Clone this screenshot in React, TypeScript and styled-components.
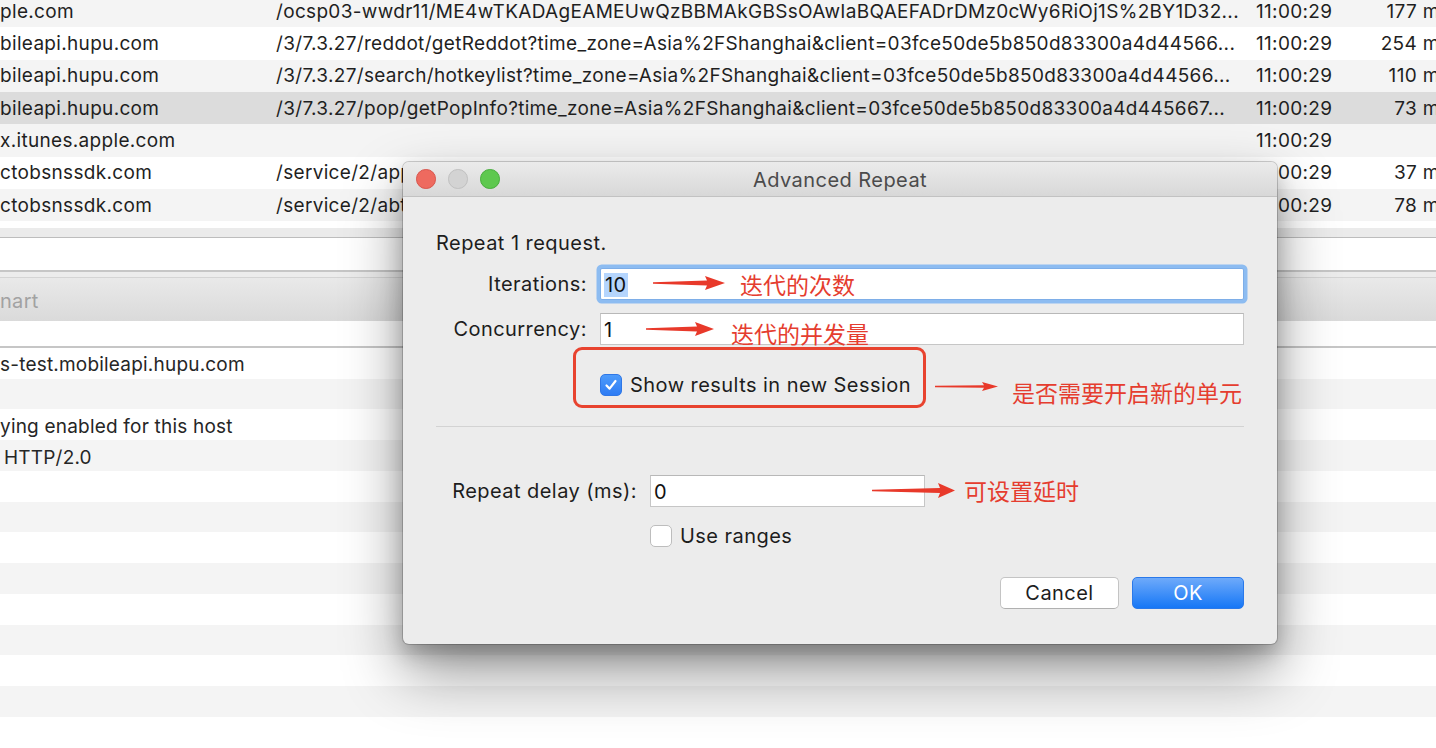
import React from "react";
import styled, { createGlobalStyle } from "styled-components";

const GlobalStyle = createGlobalStyle`
  html, body { margin: 0; padding: 0; background: #fff; }
  body { font-family: Inter, "Noto Sans CJK SC", sans-serif; color: #222; }
  * { box-sizing: border-box; }
`;

const Screen = styled.div`
  position: relative;
  width: 1436px;
  height: 748px;
  overflow: hidden;
  background: #fff;
  font-size: 19px;
`;

const Backdrop = styled.div`
  display: flex;
  flex-direction: column;
`;

const TopTable = styled.div`
  margin-top: -5px;
  display: flex;
  flex-direction: column;
`;

type Tone = "gray" | "white" | "sel";
const toneBg = (t: Tone) => (t === "gray" ? "#f4f4f4" : t === "sel" ? "#dcdcdc" : "#ffffff");

const TopRow = styled.div<{ $tone: Tone }>`
  display: grid;
  grid-template-columns: 276px 980px 108px 96px;
  width: 1460px;
  height: 32.33px;
  align-items: center;
  background: ${(p) => toneBg(p.$tone)};
  color: #1f1f1f;
  letter-spacing: 0.32px;
`;

const Cell = styled.div<{ $right?: boolean }>`
  white-space: nowrap;
  overflow: hidden;
  text-align: ${(p) => (p.$right ? "right" : "left")};
  padding-right: 10px;
`;

const TableFoot = styled.div`
  height: 6.7px;
  background: #fff;
`;

const HScroll = styled.div`
  height: 10px;
  background: #ebebeb;
  border-bottom: 1px solid #bdbdbd;
`;

const BlankStrip = styled.div<{ $h: number }>`
  height: ${(p) => p.$h}px;
  background: #fff;
  border-bottom: 2px solid #c6c6c6;
`;

const TabGap = styled.div`
  height: 6px;
  background: #ececec;
  border-bottom: 1px solid #d4d4d4;
`;

const TabBar = styled.div`
  height: 43px;
  background: linear-gradient(#e9e9e9, #dadada);
  display: flex;
  align-items: center;
  color: #a2a2a2;
  font-size: 20px;
  letter-spacing: 0.3px;
  padding-top: 3px;
`;

const BottomRow = styled.div<{ $tone: Tone }>`
  height: 30.75px;
  display: flex;
  align-items: center;
  white-space: nowrap;
  background: ${(p) => toneBg(p.$tone)};
  color: #262626;
  letter-spacing: 0.2px;
  padding-top: 3px;
`;

const Indent = styled.span`
  padding-left: 4px;
`;

/* ---------- dialog ---------- */

const Dialog = styled.div`
  position: absolute;
  left: 403px;
  top: 162px;
  width: 874px;
  height: 482px;
  background: #ececec;
  border-radius: 6px;
  font-size: 20px;
  letter-spacing: 0.45px;
  box-shadow: 0 0 0 1px rgba(0, 0, 0, 0.18), 0 28px 60px rgba(0, 0, 0, 0.42),
    0 10px 20px rgba(0, 0, 0, 0.2);
  display: flex;
  flex-direction: column;
`;

const TitleBar = styled.div`
  height: 35px;
  border-radius: 6px 6px 0 0;
  background: linear-gradient(#ebebeb, #d8d8d8);
  border-bottom: 1px solid #c2c2c2;
  display: grid;
  grid-template-columns: 1fr auto 1fr;
  align-items: center;
  padding: 0 13px;
`;

const Lights = styled.div`
  display: flex;
  gap: 12.5px;
`;

const Light = styled.span<{ $c: string; $b: string }>`
  width: 19.5px;
  height: 19.5px;
  border-radius: 50%;
  background: ${(p) => p.$c};
  border: 1px solid ${(p) => p.$b};
`;

const Title = styled.div`
  color: #4b4b4b;
  padding-top: 2px;
`;

const Body = styled.div`
  position: relative;
  flex: 1;
  display: flex;
  flex-direction: column;
  padding: 34px 33px 0 33px;
`;

const Intro = styled.div`
  height: 24px;
  line-height: 24px;
  color: #1d1d1d;
`;

const Field = styled.div<{ $label: number; $mt: number }>`
  display: grid;
  grid-template-columns: ${(p) => p.$label}px auto;
  column-gap: 13px;
  align-items: center;
  margin-top: ${(p) => p.$mt}px;
`;

const Label = styled.div`
  text-align: right;
  color: #1d1d1d;
  white-space: nowrap;
`;

const Input = styled.div<{ $w: number; $focus?: boolean }>`
  width: ${(p) => p.$w}px;
  height: 32px;
  background: #fff;
  border: 1px solid #c6c6c6;
  border-top-color: #b8b8b8;
  display: flex;
  align-items: center;
  padding-left: 3px;
  padding-top: 2px;
  color: #111;
  ${(p) =>
    p.$focus
      ? "box-shadow: 0 0 0 3.5px #8dbcf1; border-color: #7eaee8; border-radius: 2px;"
      : ""}
`;

const Selected = styled.span`
  background: #b5d5fd;
  padding: 0 1px;
`;

const CheckLine = styled.div`
  display: flex;
  align-items: center;
  gap: 8px;
  color: #1d1d1d;
`;

const Box = styled.span<{ $on?: boolean }>`
  width: 22px;
  height: 22px;
  border-radius: 5px;
  display: flex;
  align-items: center;
  justify-content: center;
  background: ${(p) => (p.$on ? "linear-gradient(#4d9bfb, #2e7cf4)" : "#fff")};
  border: 1px solid ${(p) => (p.$on ? "#2f77e6" : "#bdbdbd")};
`;

const Separator = styled.div`
  height: 1px;
  background: #d3d3d3;
  margin-top: 29px;
`;

const Buttons = styled.div`
  display: flex;
  justify-content: flex-end;
  gap: 13px;
  margin-top: 29px;
`;

const Button = styled.div<{ $primary?: boolean; $w: number }>`
  width: ${(p) => p.$w}px;
  height: 32px;
  border-radius: 5px;
  display: flex;
  align-items: center;
  justify-content: center;
  ${(p) =>
    p.$primary
      ? "background: linear-gradient(#6eaafa, #1677f6); color: #fff; border: 1px solid #2a79ea;"
      : "background: #fff; color: #1d1d1d; border: 1px solid #c4c4c4; border-bottom-color: #b0b0b0;"}
`;

/* ---------- annotations ---------- */

const RedFrame = styled.div`
  position: absolute;
  left: 170px;
  top: 185px;
  width: 353px;
  height: 61px;
  border: 3px solid #e8432f;
  border-radius: 9px;
`;

const Note = styled.div<{ $x: number; $y: number; $gap: number }>`
  position: absolute;
  left: ${(p) => p.$x}px;
  top: ${(p) => p.$y}px;
  height: 30px;
  display: flex;
  align-items: center;
  gap: ${(p) => p.$gap}px;
`;

const NoteText = styled.span<{ $dy: number }>`
  color: #e53d2f;
  font-family: "Noto Sans CJK SC", sans-serif;
  font-size: 23px;
  letter-spacing: 0;
  white-space: nowrap;
  transform: translateY(${(p) => p.$dy}px);
`;

function Arrow({ w, head, hh, t }: { w: number; head: number; hh: number; t: number }) {
  const h = hh * 2 + 2;
  const c = h / 2;
  const d = `M0 ${c - 0.7} L${w - head} ${c - t} L${w - head - 2} ${c - hh} L${w} ${c} L${w - head - 2} ${c + hh} L${w - head} ${c + t} L0 ${c + 0.7} Z`;
  return (
    <svg width={w} height={h} viewBox={`0 0 ${w} ${h}`}>
      <path d={d} fill="#e8392a" />
    </svg>
  );
}

function Check() {
  return (
    <svg width="14" height="14" viewBox="0 0 14 14">
      <path d="M2.5 7.5 L5.6 10.6 L11.5 3" fill="none" stroke="#fff" strokeWidth="2.2" strokeLinecap="round" strokeLinejoin="round" />
    </svg>
  );
}

const topRows: { tone: Tone; host: string; path: string; time: string; dur: string }[] = [
  { tone: "gray", host: "ple.com", path: "/ocsp03-wwdr11/ME4wTKADAgEAMEUwQzBBMAkGBSsOAwIaBQAEFADrDMz0cWy6RiOj1S%2BY1D32...", time: "11:00:29", dur: "177 ms" },
  { tone: "white", host: "bileapi.hupu.com", path: "/3/7.3.27/reddot/getReddot?time_zone=Asia%2FShanghai&client=03fce50de5b850d83300a4d44566...", time: "11:00:29", dur: "254 ms" },
  { tone: "gray", host: "bileapi.hupu.com", path: "/3/7.3.27/search/hotkeylist?time_zone=Asia%2FShanghai&client=03fce50de5b850d83300a4d44566...", time: "11:00:29", dur: "110 ms" },
  { tone: "sel", host: "bileapi.hupu.com", path: "/3/7.3.27/pop/getPopInfo?time_zone=Asia%2FShanghai&client=03fce50de5b850d83300a4d445667...", time: "11:00:29", dur: "73 ms" },
  { tone: "gray", host: "x.itunes.apple.com", path: "", time: "11:00:29", dur: "" },
  { tone: "white", host: "ctobsnssdk.com", path: "/service/2/app_log_config/", time: "11:00:29", dur: "37 ms" },
  { tone: "gray", host: "ctobsnssdk.com", path: "/service/2/abtest_config/", time: "11:00:29", dur: "78 ms" },
];

const bottomRows: React.ReactNode[] = [
  "s-test.mobileapi.hupu.com",
  "",
  "ying enabled for this host",
  <Indent key="h">HTTP/2.0</Indent>,
  "", "", "", "", "", "", "", "", "",
];

export default function App() {
  return (
    <Screen>
      <GlobalStyle />
      <Backdrop>
        <TopTable>
          {topRows.map((r, i) => (
            <TopRow key={i} $tone={r.tone}>
              <Cell>{r.host}</Cell>
              <Cell>{r.path}</Cell>
              <Cell>{r.time}</Cell>
              <Cell $right>{r.dur}</Cell>
            </TopRow>
          ))}
        </TopTable>
        <TableFoot />
        <HScroll />
        <BlankStrip $h={34} />
        <TabGap />
        <TabBar>nart</TabBar>
        <BlankStrip $h={27} />
        {bottomRows.map((t, i) => (
          <BottomRow key={i} $tone={i % 2 === 0 ? "white" : "gray"}>
            {t}
          </BottomRow>
        ))}
      </Backdrop>

      <Dialog>
        <TitleBar>
          <Lights>
            <Light $c="#ee6a5f" $b="#d8534a" />
            <Light $c="#d3d3d3" $b="#c0c0c0" />
            <Light $c="#5ec84f" $b="#45ad3a" />
          </Lights>
          <Title>Advanced Repeat</Title>
          <span />
        </TitleBar>
        <Body>
          <Intro>Repeat 1 request.</Intro>
          <Field $label={151} $mt={13}>
            <Label>Iterations:</Label>
            <Input $w={644} $focus>
              <Selected>10</Selected>
            </Input>
          </Field>
          <Field $label={151} $mt={13}>
            <Label>Concurrency:</Label>
            <Input $w={644}>1</Input>
          </Field>
          <Field $label={151} $mt={28}>
            <span />
            <CheckLine>
              <Box $on>
                <Check />
              </Box>
              Show results in new Session
            </CheckLine>
          </Field>
          <Separator />
          <Field $label={201} $mt={48}>
            <Label>Repeat delay (ms):</Label>
            <Input $w={275}>0</Input>
          </Field>
          <Field $label={201} $mt={17}>
            <span />
            <CheckLine>
              <Box />
              Use ranges
            </CheckLine>
          </Field>
          <Buttons>
            <Button $w={119}>Cancel</Button>
            <Button $w={112} $primary>
              OK
            </Button>
          </Buttons>
        </Body>

        <RedFrame />
        <Note $x={250} $y={106} $gap={15}>
          <Arrow w={72} head={18} hh={7} t={2.5} />
          <NoteText $dy={1}>迭代的次数</NoteText>
        </Note>
        <Note $x={243} $y={152} $gap={17}>
          <Arrow w={68} head={17} hh={7} t={2.5} />
          <NoteText $dy={4}>迭代的并发量</NoteText>
        </Note>
        <Note $x={532} $y={209} $gap={14}>
          <Arrow w={63} head={14} hh={4.5} t={1.2} />
          <NoteText $dy={6}>是否需要开启新的单元</NoteText>
        </Note>
        <Note $x={469} $y={313} $gap={9}>
          <Arrow w={83} head={15} hh={7.5} t={2.5} />
          <NoteText $dy={0}>可设置延时</NoteText>
        </Note>
      </Dialog>
    </Screen>
  );
}
